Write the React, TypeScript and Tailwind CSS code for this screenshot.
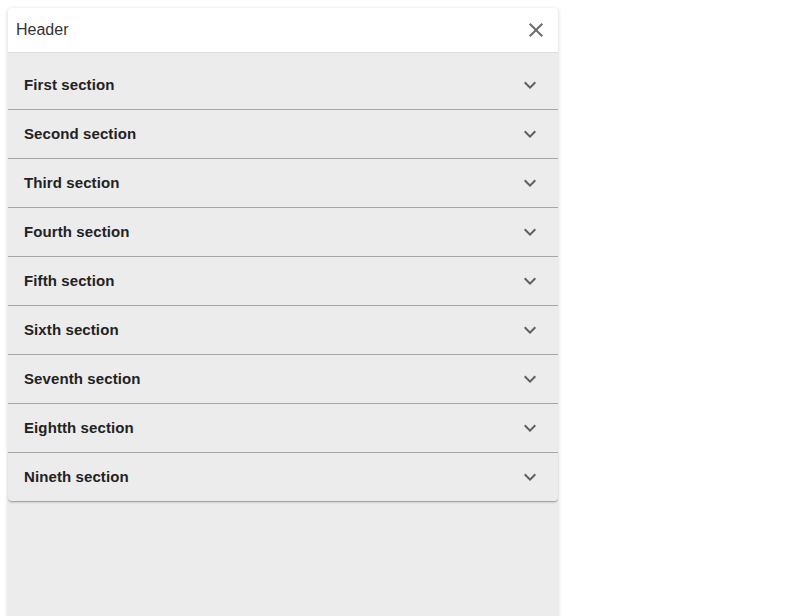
import React from "react";

const sections = [
  "First section",
  "Second section",
  "Third section",
  "Fourth section",
  "Fifth section",
  "Sixth section",
  "Seventh section",
  "Eightth section",
  "Nineth section",
];

function Chevron() {
  return (
    <svg width="24" height="24" viewBox="0 0 24 24" fill="#5f5f5f">
      <path d="M16.59 8.59 12 13.17 7.41 8.59 6 10l6 6 6-6z" />
    </svg>
  );
}

function Close() {
  return (
    <svg width="24" height="24" viewBox="0 0 24 24" fill="#6b6b6b">
      <path d="M19 6.41 17.59 5 12 10.59 6.41 5 5 6.41 10.59 12 5 17.59 6.41 19 12 13.41 17.59 19 19 17.59 13.41 12z" />
    </svg>
  );
}

export default function App() {
  return (
    <div className="h-[616px] w-[800px] bg-white overflow-hidden" style={{ fontFamily: "'Liberation Sans', Arial, sans-serif" }}>
      <div className="ml-2 mt-2 w-[550px] h-[640px] flex flex-col rounded-t bg-[#ececec] shadow-[0_1px_4px_rgba(0,0,0,0.18)]">
        <div className="h-[45px] flex items-center justify-between pl-2 pr-[10px] bg-white rounded-t border-b border-[#dcdcdc]">
          <span className="text-base text-[#333]">Header</span>
          <Close />
        </div>
        <div className="pt-2 flex flex-col">
          {sections.map((s, i) => (
            <div
              key={s}
              className={`h-[49px] flex items-center justify-between pl-4 pr-4 border-b border-[#a6a6a6] ${i === sections.length - 1 ? "rounded-b shadow-[0_1px_2px_rgba(0,0,0,0.12)]" : ""}`}
            >
              <span className="text-[15px] font-bold text-[#222] tracking-[0.1px]">{s}</span>
              <Chevron />
            </div>
          ))}
        </div>
      </div>
    </div>
  );
}
